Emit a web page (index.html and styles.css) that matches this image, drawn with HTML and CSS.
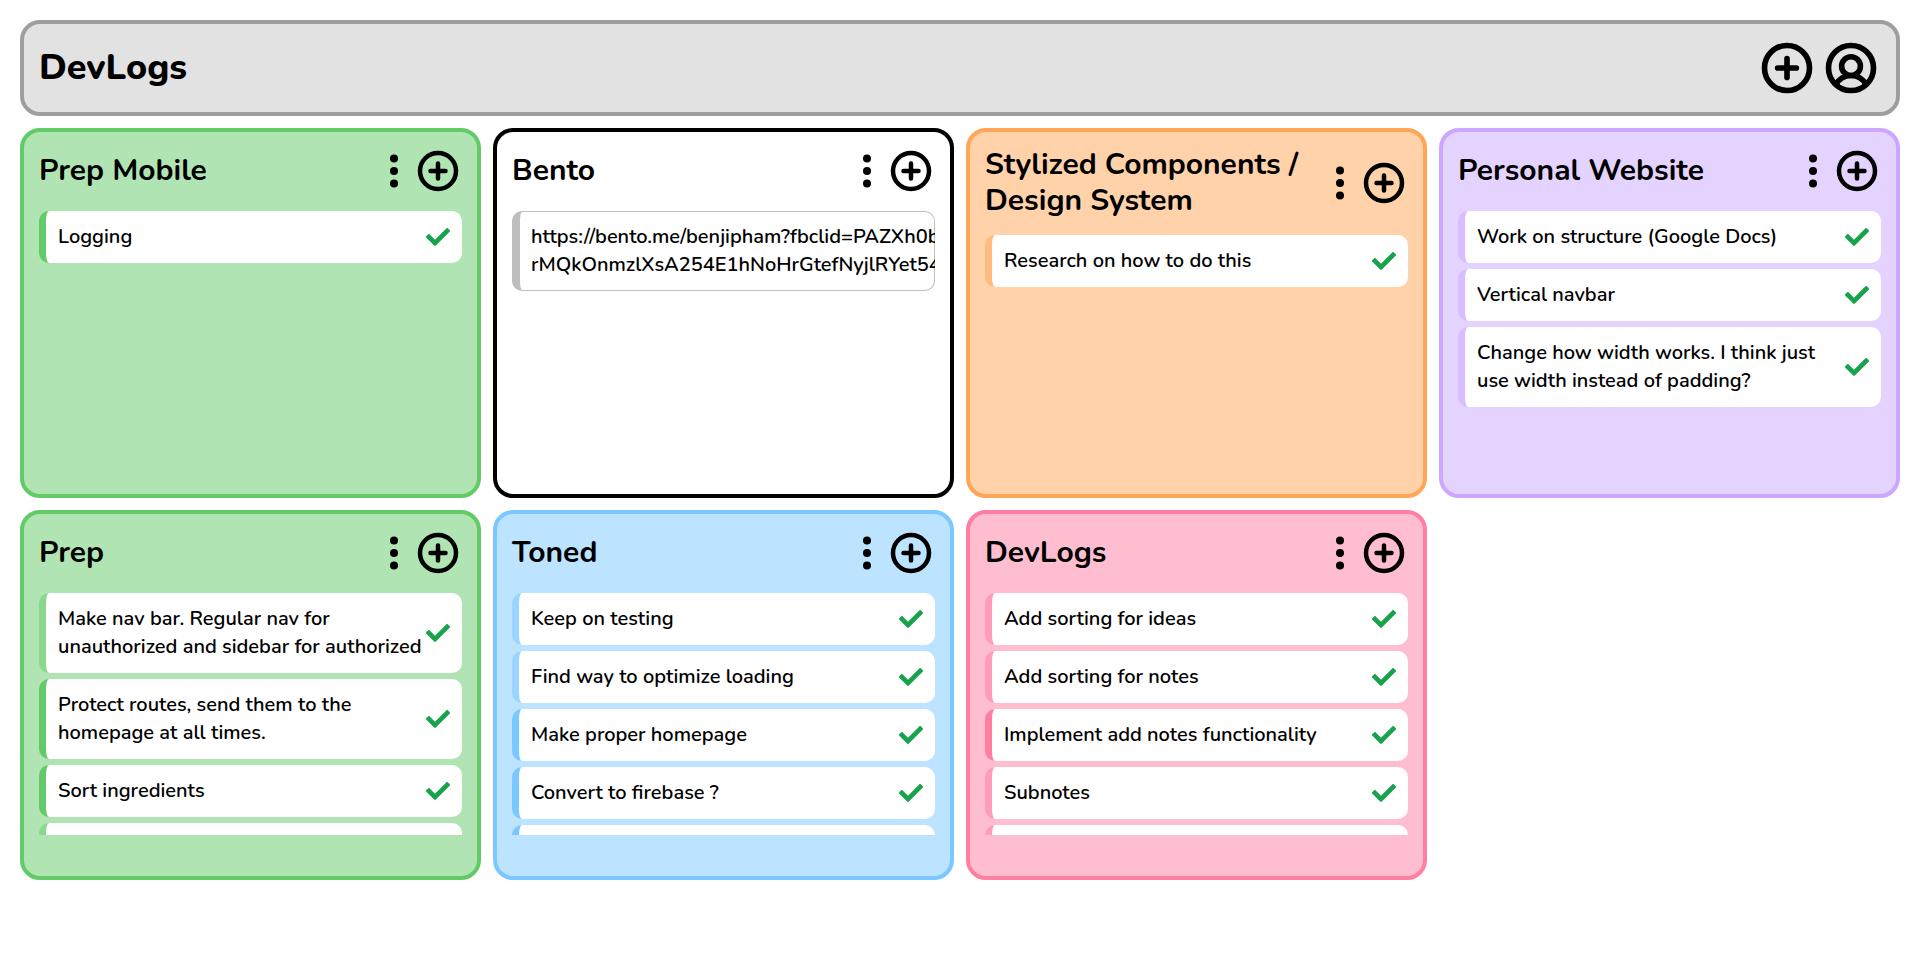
FILE: index.html
```html
<!DOCTYPE html>
<html lang="en">
<head>
<meta charset="utf-8">
<title>DevLogs</title>
<link rel="stylesheet" href="styles.css">
</head>
<body>
<svg class="sprite" aria-hidden="true">
  <symbol id="plus" viewBox="0 0 256 256"><g fill="none" stroke="currentColor" stroke-width="24" stroke-linecap="round"><circle cx="128" cy="128" r="96"/><path d="M88 128h80M128 88v80"/></g></symbol>
  <symbol id="user" viewBox="0 0 256 256"><g fill="none" stroke="currentColor" stroke-width="24"><circle cx="128" cy="128" r="96"/><circle cx="128" cy="120" r="40"/><path d="M63.8 199.4a72 72 0 0 1 128.4 0"/></g></symbol>
  <symbol id="dots" viewBox="0 0 40 48"><circle cx="20" cy="11.5" r="4"/><circle cx="20" cy="24" r="4"/><circle cx="20" cy="36.5" r="4"/></symbol>
  <symbol id="check" viewBox="0 0 512 512"><path fill="currentColor" d="M173.9 439.4l-166.4-166.4c-10-10-10-26.2 0-36.2l36.2-36.2c10-10 26.2-10 36.2 0L192 312.7 432.1 72.6c10-10 26.2-10 36.2 0l36.2 36.2c10 10 10 26.2 0 36.2l-294.4 294.4c-10 10-26.2 10-36.2 0z"/></symbol>
</svg>

<header class="topbar">
  <h1 class="topbar-title">DevLogs</h1>
  <nav class="topbar-actions">
    <button class="icon-btn icon-lg" aria-label="Add project"><svg><use href="#plus"/></svg></button>
    <button class="icon-btn icon-lg" aria-label="Account"><svg><use href="#user"/></svg></button>
  </nav>
</header>

<main class="board">
  <section class="card green">
    <div class="card-head"><h2 class="card-title">Prep Mobile</h2><button class="icon-btn icon-dots" aria-label="Options"><svg><use href="#dots"/></svg></button><button class="icon-btn icon-md" aria-label="Add note"><svg><use href="#plus"/></svg></button></div>
    <ul class="notes">
      <li class="note strong"><span class="note-text">Logging</span><button class="icon-btn done" aria-label="Done"><svg><use href="#check"/></svg></button></li>
    </ul>
  </section>

  <section class="card plain">
    <div class="card-head"><h2 class="card-title">Bento</h2><button class="icon-btn icon-dots" aria-label="Options"><svg><use href="#dots"/></svg></button><button class="icon-btn icon-md" aria-label="Add note"><svg><use href="#plus"/></svg></button></div>
    <ul class="notes">
      <li class="note"><span class="note-text nowrap">https://bento.me/benjipham?fbclid=PAZXh0b<br>rMQkOnmzlXsA254E1hNoHrGtefNyjlRYet54</span></li>
    </ul>
  </section>

  <section class="card orange">
    <div class="card-head"><h2 class="card-title">Stylized Components / Design System</h2><button class="icon-btn icon-dots" aria-label="Options"><svg><use href="#dots"/></svg></button><button class="icon-btn icon-md" aria-label="Add note"><svg><use href="#plus"/></svg></button></div>
    <ul class="notes">
      <li class="note"><span class="note-text">Research on how to do this</span><button class="icon-btn done" aria-label="Done"><svg><use href="#check"/></svg></button></li>
    </ul>
  </section>

  <section class="card purple">
    <div class="card-head"><h2 class="card-title">Personal Website</h2><button class="icon-btn icon-dots" aria-label="Options"><svg><use href="#dots"/></svg></button><button class="icon-btn icon-md" aria-label="Add note"><svg><use href="#plus"/></svg></button></div>
    <ul class="notes">
      <li class="note"><span class="note-text">Work on structure (Google Docs)</span><button class="icon-btn done" aria-label="Done"><svg><use href="#check"/></svg></button></li>
      <li class="note"><span class="note-text">Vertical navbar</span><button class="icon-btn done" aria-label="Done"><svg><use href="#check"/></svg></button></li>
      <li class="note"><span class="note-text">Change how width works. I think just use width instead of padding?</span><button class="icon-btn done" aria-label="Done"><svg><use href="#check"/></svg></button></li>
    </ul>
  </section>

  <section class="card green">
    <div class="card-head"><h2 class="card-title">Prep</h2><button class="icon-btn icon-dots" aria-label="Options"><svg><use href="#dots"/></svg></button><button class="icon-btn icon-md" aria-label="Add note"><svg><use href="#plus"/></svg></button></div>
    <ul class="notes">
      <li class="note"><span class="note-text">Make nav bar. Regular nav for unauthorized and sidebar for authorized</span><button class="icon-btn done" aria-label="Done"><svg><use href="#check"/></svg></button></li>
      <li class="note strong"><span class="note-text">Protect routes, send them to the homepage at all times.</span><button class="icon-btn done" aria-label="Done"><svg><use href="#check"/></svg></button></li>
      <li class="note strong"><span class="note-text">Sort ingredients</span><button class="icon-btn done" aria-label="Done"><svg><use href="#check"/></svg></button></li>
      <li class="note"></li>
    </ul>
  </section>

  <section class="card blue">
    <div class="card-head"><h2 class="card-title">Toned</h2><button class="icon-btn icon-dots" aria-label="Options"><svg><use href="#dots"/></svg></button><button class="icon-btn icon-md" aria-label="Add note"><svg><use href="#plus"/></svg></button></div>
    <ul class="notes">
      <li class="note"><span class="note-text">Keep on testing</span><button class="icon-btn done" aria-label="Done"><svg><use href="#check"/></svg></button></li>
      <li class="note"><span class="note-text">Find way to optimize loading</span><button class="icon-btn done" aria-label="Done"><svg><use href="#check"/></svg></button></li>
      <li class="note strong"><span class="note-text">Make proper homepage</span><button class="icon-btn done" aria-label="Done"><svg><use href="#check"/></svg></button></li>
      <li class="note strong"><span class="note-text">Convert to firebase ?</span><button class="icon-btn done" aria-label="Done"><svg><use href="#check"/></svg></button></li>
      <li class="note strong"></li>
    </ul>
  </section>

  <section class="card pink">
    <div class="card-head"><h2 class="card-title">DevLogs</h2><button class="icon-btn icon-dots" aria-label="Options"><svg><use href="#dots"/></svg></button><button class="icon-btn icon-md" aria-label="Add note"><svg><use href="#plus"/></svg></button></div>
    <ul class="notes">
      <li class="note"><span class="note-text">Add sorting for ideas</span><button class="icon-btn done" aria-label="Done"><svg><use href="#check"/></svg></button></li>
      <li class="note"><span class="note-text">Add sorting for notes</span><button class="icon-btn done" aria-label="Done"><svg><use href="#check"/></svg></button></li>
      <li class="note strong"><span class="note-text">Implement add notes functionality</span><button class="icon-btn done" aria-label="Done"><svg><use href="#check"/></svg></button></li>
      <li class="note"><span class="note-text">Subnotes</span><button class="icon-btn done" aria-label="Done"><svg><use href="#check"/></svg></button></li>
      <li class="note"></li>
    </ul>
  </section>
</main>
</body>
</html>
```
FILE: styles.css
```css
* { box-sizing: border-box; margin: 0; padding: 0; }

body {
  display: flex;
  flex-direction: column;
  gap: 12px;
  padding: 20px;
  background: #fff;
  color: #000;
  font-family: Nunito, Lato, "Open Sans", sans-serif;
  font-size: 20px;
  font-weight: 600;
  line-height: 28px;
}

.sprite { display: none; }

.topbar {
  display: flex;
  align-items: center;
  justify-content: space-between;
  padding: 14px 15px;
  border: 4px solid #9e9e9e;
  border-radius: 20px;
  background: #e2e2e2;
}
.topbar-title { font-size: 36px; line-height: 40px; font-weight: 800; }
.topbar-actions { display: flex; gap: 4px; }

.icon-btn {
  flex: none;
  border: 0;
  background: none;
  color: inherit;
  cursor: pointer;
}
.icon-btn svg { display: block; width: 100%; height: 100%; }
.icon-lg { width: 60px; height: 60px; }
.icon-md { width: 48px; height: 48px; }
.icon-dots { width: 40px; height: 48px; }
.done { width: 24px; height: 24px; color: #16a34a; }

.board {
  display: grid;
  grid-template-columns: repeat(4, minmax(0, 1fr));
  grid-auto-rows: 370px;
  gap: 12px;
}

.card {
  display: flex;
  flex-direction: column;
  gap: 16px;
  padding: 15px;
  border: 4px solid var(--main);
  border-radius: 20px;
  background: var(--fill);
}
.green { --main: #62cb68; --fill: #b0e5b3; --soft: #89d88e; }
.plain { --main: #000; --fill: #fff; --soft: #bebebe; }
.orange { --main: #ffa556; --fill: #ffd2aa; --soft: #ffbb80; }
.purple { --main: #cba7ff; --fill: #e5d3ff; --soft: #d8bdff; }
.blue { --main: #7ac8ff; --fill: #bce3ff; --soft: #9bd5ff; }
.pink { --main: #ff7ea1; --fill: #ffbdd0; --soft: #ff9db9; }

.card-head { display: flex; align-items: center; }
.card-title { flex: 1; font-size: 30px; line-height: 36px; font-weight: 700; }

.notes {
  display: flex;
  flex-direction: column;
  gap: 6px;
  max-height: 242px;
  overflow: hidden;
  list-style: none;
}
.note {
  display: flex;
  flex: none;
  align-items: center;
  justify-content: space-between;
  min-height: 52px;
  padding: 12px;
  border-left: 7px solid var(--soft);
  border-radius: 10px;
  background: #fff;
}
.note.strong { border-left-color: var(--main); }
.plain .note {
  padding: 11px;
  border: 1px solid var(--soft);
  border-left-width: 8px;
}
.nowrap { white-space: nowrap; }
```
